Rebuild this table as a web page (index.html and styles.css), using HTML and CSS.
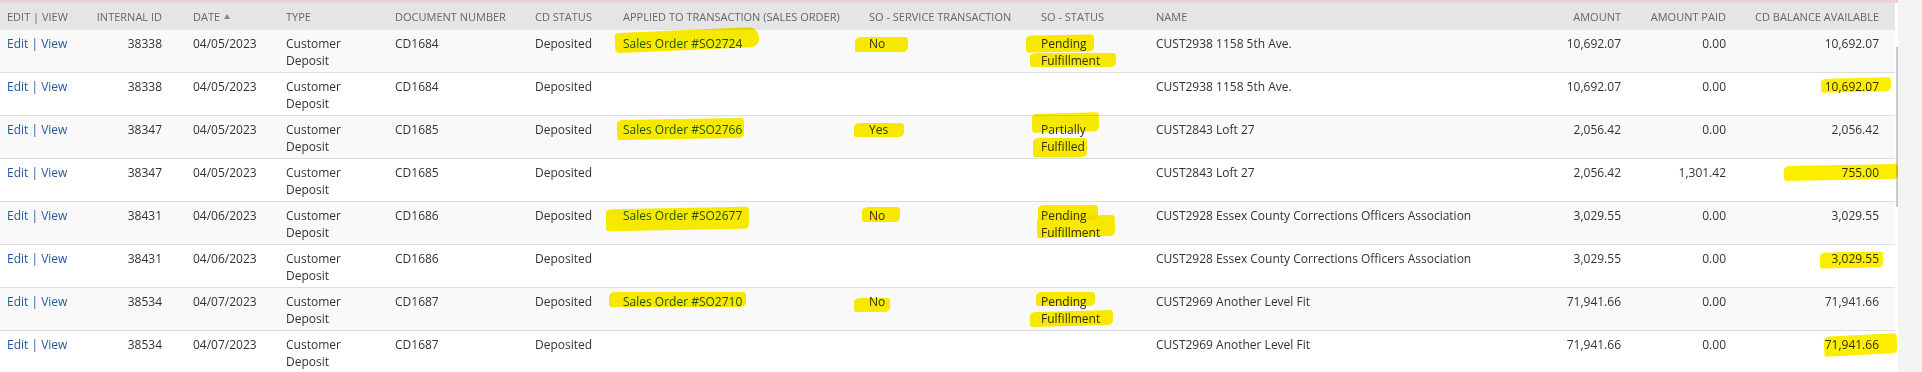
FILE: index.html
```html
<!DOCTYPE html>
<html lang="en">
<head>
<meta charset="utf-8">
<title>Customer Deposits</title>
<link rel="stylesheet" href="styles.css">
</head>
<body>
<div class="frame">
  <table class="grid">
    <colgroup>
      <col class="c-edit"><col class="c-id"><col class="c-date"><col class="c-type"><col class="c-doc"><col class="c-cds"><col class="c-app"><col class="c-svc"><col class="c-sos"><col class="c-name"><col class="c-amt"><col class="c-paid"><col class="c-bal">
    </colgroup>
    <thead>
      <tr>
        <th>Edit | View</th>
        <th class="num">Internal ID</th>
        <th>Date<span class="sort"></span></th>
        <th>Type</th>
        <th>Document Number</th>
        <th>CD Status</th>
        <th>Applied to Transaction (Sales Order)</th>
        <th>SO - Service Transaction</th>
        <th>SO - Status</th>
        <th>Name</th>
        <th class="num">Amount</th>
        <th class="num">Amount Paid</th>
        <th class="num last">CD Balance Available</th>
      </tr>
    </thead>
    <tbody>
      <tr class="odd">
        <td><a>Edit</a><span class="sep"> | </span><a>View</a></td>
        <td class="num">38338</td>
        <td>04/05/2023</td>
        <td class="type">Customer Deposit</td>
        <td>CD1684</td>
        <td>Deposited</td>
        <td><mark class="hl h-so1"><a>Sales Order #SO2724</a></mark></td>
        <td><mark class="hl h-no1">No</mark></td>
        <td class="sos"><mark class="hl h-pe1">Pending</mark><br><mark class="hl h-fu1">Fulfillment</mark></td>
        <td>CUST2938 1158 5th Ave.</td>
        <td class="num">10,692.07</td>
        <td class="num">0.00</td>
        <td class="num last">10,692.07</td>
      </tr>
      <tr>
        <td><a>Edit</a><span class="sep"> | </span><a>View</a></td>
        <td class="num">38338</td>
        <td>04/05/2023</td>
        <td class="type">Customer Deposit</td>
        <td>CD1684</td>
        <td>Deposited</td>
        <td></td>
        <td></td>
        <td class="sos"></td>
        <td>CUST2938 1158 5th Ave.</td>
        <td class="num">10,692.07</td>
        <td class="num">0.00</td>
        <td class="num last"><mark class="hl h-b2">10,692.07</mark></td>
      </tr>
      <tr class="odd">
        <td><a>Edit</a><span class="sep"> | </span><a>View</a></td>
        <td class="num">38347</td>
        <td>04/05/2023</td>
        <td class="type">Customer Deposit</td>
        <td>CD1685</td>
        <td>Deposited</td>
        <td><mark class="hl h-so3"><a>Sales Order #SO2766</a></mark></td>
        <td><mark class="hl h-no3">Yes</mark></td>
        <td class="sos"><mark class="hl h-pa3">Partially</mark><br><mark class="hl h-fu3">Fulfilled</mark></td>
        <td>CUST2843 Loft 27</td>
        <td class="num">2,056.42</td>
        <td class="num">0.00</td>
        <td class="num last">2,056.42</td>
      </tr>
      <tr>
        <td><a>Edit</a><span class="sep"> | </span><a>View</a></td>
        <td class="num">38347</td>
        <td>04/05/2023</td>
        <td class="type">Customer Deposit</td>
        <td>CD1685</td>
        <td>Deposited</td>
        <td></td>
        <td></td>
        <td class="sos"></td>
        <td>CUST2843 Loft 27</td>
        <td class="num">2,056.42</td>
        <td class="num">1,301.42</td>
        <td class="num last"><mark class="hl h-b4">755.00</mark></td>
      </tr>
      <tr class="odd">
        <td><a>Edit</a><span class="sep"> | </span><a>View</a></td>
        <td class="num">38431</td>
        <td>04/06/2023</td>
        <td class="type">Customer Deposit</td>
        <td>CD1686</td>
        <td>Deposited</td>
        <td><mark class="hl h-so5"><a>Sales Order #SO2677</a></mark></td>
        <td><mark class="hl h-no5">No</mark></td>
        <td class="sos"><mark class="hl h-pe5">Pending</mark><br><mark class="hl h-fu5">Fulfillment</mark></td>
        <td>CUST2928 Essex County Corrections Officers Association</td>
        <td class="num">3,029.55</td>
        <td class="num">0.00</td>
        <td class="num last">3,029.55</td>
      </tr>
      <tr>
        <td><a>Edit</a><span class="sep"> | </span><a>View</a></td>
        <td class="num">38431</td>
        <td>04/06/2023</td>
        <td class="type">Customer Deposit</td>
        <td>CD1686</td>
        <td>Deposited</td>
        <td></td>
        <td></td>
        <td class="sos"></td>
        <td>CUST2928 Essex County Corrections Officers Association</td>
        <td class="num">3,029.55</td>
        <td class="num">0.00</td>
        <td class="num last"><mark class="hl h-b6">3,029.55</mark></td>
      </tr>
      <tr class="odd">
        <td><a>Edit</a><span class="sep"> | </span><a>View</a></td>
        <td class="num">38534</td>
        <td>04/07/2023</td>
        <td class="type">Customer Deposit</td>
        <td>CD1687</td>
        <td>Deposited</td>
        <td><mark class="hl h-so7"><a>Sales Order #SO2710</a></mark></td>
        <td><mark class="hl h-no7">No</mark></td>
        <td class="sos"><mark class="hl h-pe7">Pending</mark><br><mark class="hl h-fu7">Fulfillment</mark></td>
        <td>CUST2969 Another Level Fit</td>
        <td class="num">71,941.66</td>
        <td class="num">0.00</td>
        <td class="num last">71,941.66</td>
      </tr>
      <tr>
        <td><a>Edit</a><span class="sep"> | </span><a>View</a></td>
        <td class="num">38534</td>
        <td>04/07/2023</td>
        <td class="type">Customer Deposit</td>
        <td>CD1687</td>
        <td>Deposited</td>
        <td></td>
        <td></td>
        <td class="sos"></td>
        <td>CUST2969 Another Level Fit</td>
        <td class="num">71,941.66</td>
        <td class="num">0.00</td>
        <td class="num last"><mark class="hl h-b8">71,941.66</mark></td>
      </tr>
    </tbody>
  </table>
  <div class="scroll"><div class="thumb"></div></div>
</div>
</body>
</html>
```

FILE: styles.css
```css
html, body {
  margin: 0;
  padding: 0;
}
body {
  background: #f3f3f3;
  font-family: "Open Sans", "Noto Sans", sans-serif;
  font-size: 12px;
  color: #333;
  overflow: hidden;
}
.frame {
  width: 1898px;
  background: #fff;
  border-top: 3px solid #ecd2d2;
  display: flex;
  align-items: flex-start;
}
.grid {
  width: 1895px;
  table-layout: fixed;
  border-collapse: collapse;
  border-spacing: 0;
  flex: none;
}
.c-edit { width: 88px; }
.c-id { width: 98px; }
.c-date { width: 93px; }
.c-type { width: 109px; }
.c-doc { width: 140px; }
.c-cds { width: 88px; }
.c-app { width: 246px; }
.c-svc { width: 172px; }
.c-sos { width: 115px; }
.c-name { width: 391px; }
.c-amt { width: 97px; }
.c-paid { width: 105px; }
.c-bal { width: 153px; }

th {
  background: #e5e5e5;
  color: #666;
  font-weight: normal;
  font-size: 11px;
  text-transform: uppercase;
  text-align: left;
  line-height: 17px;
  padding: 5px 7px 5px 7px;
  white-space: nowrap;
  overflow: hidden;
}
td {
  vertical-align: top;
  line-height: 17px;
  padding: 5px 7px 3px 7px;
  border-bottom: 1px solid #dcdcdc;
  white-space: normal;
}
tr.odd td {
  background: #f9f9f9;
}
th.num, td.num {
  text-align: right;
  padding-right: 24px;
}
th.last, td.last {
  padding-right: 16px;
}
th:nth-child(11), td:nth-child(11),
th:nth-child(12), td:nth-child(12) {
  padding-right: 16px;
}
td.type {
  padding-right: 30px;
}
td.sos {
  padding-right: 30px;
}
a {
  color: #255a9e;
  text-decoration: none;
}
.sep {
  color: #255a9e;
}
.sort {
  display: inline-block;
  width: 0;
  height: 0;
  margin-left: 4px;
  border-left: 3px solid transparent;
  border-right: 3px solid transparent;
  border-bottom: 5px solid #888;
  vertical-align: 2px;
}

.scroll {
  width: 3px;
  flex: none;
  align-self: stretch;
  background: #fff;
  padding-top: 44px;
}
.thumb {
  width: 2px;
  margin-left: 1px;
  height: 160px;
  background: #c9c9c9;
}

/* hand-drawn marker highlights */
.hl {
  background: transparent;
  color: inherit;
  position: relative;
  display: inline-block;
}
.hl::after {
  content: "";
  position: absolute;
  background: #fdee00;
  mix-blend-mode: multiply;
  border-radius: 6px 3px 5px 2px / 4px 3px 5px 3px;
  pointer-events: none;
}
.h-so1::after { left: -8px; right: -17px; top: -5px; bottom: 2px; transform: rotate(-2.5deg); border-radius: 4px 10px 8px 4px; }
.h-no1::after { left: -14px; right: -23px; top: 2px; bottom: 0; }
.h-pe1::after { left: -15px; right: -7px; top: 0; bottom: 0; transform: rotate(-1deg); }
.h-fu1::after { left: -11px; right: -16px; top: 1px; bottom: 2px; }
.h-b2::after { left: -4px; right: -12px; top: 0; bottom: 3px; transform: rotate(-1.5deg); }
.h-so3::after { left: -6px; right: -2px; top: -2px; bottom: -1px; transform: rotate(-1deg); }
.h-no3::after { left: -15px; right: -16px; top: 2px; bottom: 1px; }
.h-pa3::after { left: -9px; right: -13px; top: -8px; bottom: 6px; transform: rotate(-1.5deg); }
.h-fu3::after { left: -8px; right: -2px; top: 0; bottom: -2px; }
.h-b4::after { left: -58px; right: -19px; top: 1px; bottom: 1px; transform: rotate(-1deg); }
.h-so5::after { left: -17px; right: -7px; top: 1px; bottom: -6px; transform: rotate(-1deg); }
.h-no5::after { left: -7px; right: -15px; top: 0; bottom: 2px; }
.h-pe5::after { left: -3px; right: -11px; top: -2px; bottom: 4px; }
.h-fu5::after { left: -4px; right: -15px; top: -8px; bottom: 4px; transform: rotate(-2deg); }
.h-b6::after { left: -12px; right: -4px; top: 2px; bottom: -1px; transform: rotate(-1deg); }
.h-so7::after { left: -14px; right: -4px; top: -1px; bottom: 3px; }
.h-no7::after { left: -15px; right: -5px; top: 5px; bottom: -2px; }
.h-pe7::after { left: -5px; right: -8px; top: -1px; bottom: 4px; }
.h-fu7::after { left: -11px; right: -13px; top: 1px; bottom: 1px; transform: rotate(-1.5deg); }
.h-b8::after { left: -1px; right: -18px; top: -1px; bottom: -2px; transform: rotate(-3deg); }
```
